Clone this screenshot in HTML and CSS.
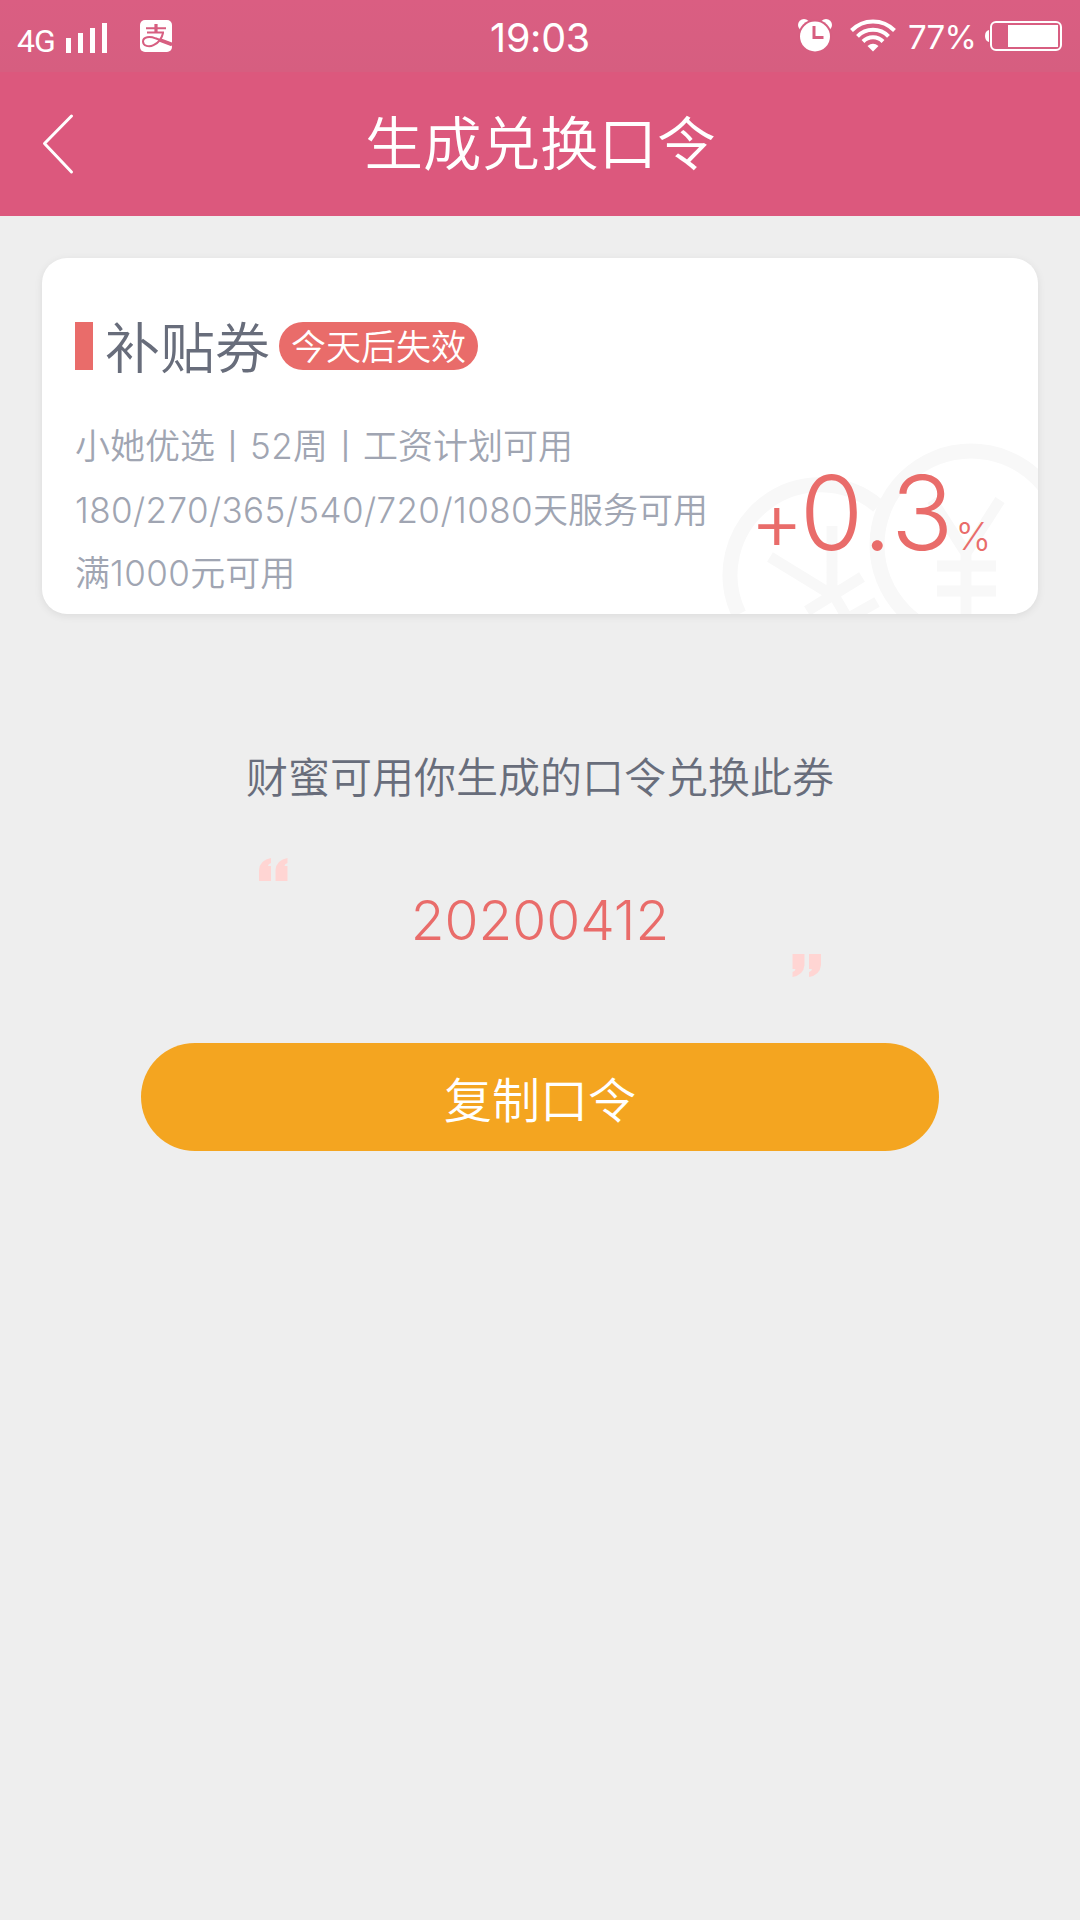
FILE: index.html
```html
<!DOCTYPE html>
<html lang="zh-CN">
<head>
  <meta charset="UTF-8">
  <meta name="viewport" content="width=device-width, initial-scale=1.0">
  <title>生成兑换口令</title>
  <link rel="stylesheet" href="styles.css">
</head>
<body>
  <div class="status-bar">
    <div class="status-left">
      <span class="network">4G</span>
      <svg class="signal" width="42" height="30" viewBox="0 0 42 30" fill="#fff">
        <rect x="0" y="15" width="5" height="15"/>
        <rect x="12" y="10" width="5" height="20"/>
        <rect x="24" y="5" width="5" height="25"/>
        <rect x="36" y="0" width="5" height="30"/>
      </svg>
      <svg class="pay-icon" width="32" height="32" viewBox="0 0 32 32">
        <rect width="32" height="32" rx="5" fill="#fff"/>
        <g fill="none" stroke="#d75e80">
          <path d="M6 8.2h20M7 12.6h17" stroke-width="2"/>
          <path d="M16 4v9" stroke-width="3.2"/>
          <path d="M23 13c-1 5-5 10-9.500 12.200C9 27.500 3 26 3 21.500c0-5 7-5.500 12.500-3.200L32 24.500" stroke-width="2"/>
          <path d="M20 20l12 4.500" stroke-width="3.600"/>
        </g>
      </svg>
    </div>
    <div class="time">19:03</div>
    <div class="status-right">
      <svg class="alarm" width="34" height="33" viewBox="0 0 34 33">
        <circle cx="6" cy="6" r="6" fill="#fff"/>
        <circle cx="28" cy="6" r="6" fill="#fff"/>
        <circle cx="17" cy="17.500" r="17" fill="#d75e80"/>
        <circle cx="17" cy="17.500" r="15" fill="#fff"/>
        <path d="M16 7v11.500h9.500" fill="none" stroke="#d75e80" stroke-width="3"/>
      </svg>
      <svg class="wifi" width="46" height="33" viewBox="0 0 46 33">
        <g fill="none" stroke="#fff" stroke-width="4">
          <path d="M1.500 11.500a30 30 0 0 1 43 0"/>
          <path d="M7.500 17.300a21.500 21.500 0 0 1 31 0"/>
          <path d="M13 22.500a14 14 0 0 1 20 0"/>
        </g>
        <path d="M17.500 27q5.500-4.500 11 0L23 32.500z" fill="#fff"/>
      </svg>
      <span class="percent">77%</span>
      <svg class="battery" width="78" height="30" viewBox="0 0 78 30">
        <path d="M4 9v12q-4-1-4-6t4-6z" fill="#fff"/>
        <rect x="6" y="1" width="70" height="28" rx="5" fill="none" stroke="#fff" stroke-width="2"/>
        <rect x="23" y="4" width="50" height="22" fill="#fff"/>
      </svg>
    </div>
  </div>

  <div class="nav-bar">
    <svg class="back" width="32" height="62" viewBox="0 0 32 62">
      <path d="M29.500 3L2.500 30.500L29.500 59" fill="none" stroke="#fff" stroke-width="3" stroke-linecap="round" stroke-linejoin="round"/>
    </svg>
    <h1>生成兑换口令</h1>
  </div>

  <div class="coupon">
    <svg class="coins" width="318" height="174" viewBox="0 0 318 174" fill="none" stroke="#f8f8f8">
      <path d="M158 66A90 90 0 0 0 19 174" stroke-width="15"/>
      <circle cx="251" cy="105" r="94" stroke-width="15"/>
      <path d="M212 60l34 53l34-53M246 109v65M217 126h59M217 151h59" stroke-width="11"/>
      <path d="M50 117l62 38V86M87 171l55-34M118 184l39-22M112 152l20 34" stroke-width="11"/>
    </svg>
    <div class="coupon-info">
      <div class="coupon-title">
        <span class="mark"></span>
        <h2>补贴券</h2>
        <span class="tag">今天后失效</span>
      </div>
      <p>小她优选丨<span>52</span>周丨工资计划可用</p>
      <p><span>180/270/365/540/720/1080</span>天服务可用</p>
      <p>满<span>1000</span>元可用</p>
    </div>
    <div class="rate">
      <span class="plus">+</span><span class="number">0.3</span><span class="unit">%</span>
    </div>
  </div>

  <p class="tip">财蜜可用你生成的口令兑换此券</p>

  <div class="code-box">
    <svg class="quote" width="29" height="23" viewBox="0 0 29 23" fill="#ffd5d3">
      <path id="mark" d="M0 23V12Q1 2 12 0V5Q9 6 9 8H12V23z"/>
      <use href="#mark" x="16.500"/>
    </svg>
    <div class="code">20200412</div>
    <svg class="quote quote-end" width="29" height="23" viewBox="0 0 29 23" fill="#ffd5d3">
      <use href="#mark"/>
      <use href="#mark" x="16.500"/>
    </svg>
  </div>

  <button class="copy" type="button">复制口令</button>
</body>
</html>
```

FILE: styles.css
```css
* {
  box-sizing: border-box;
  margin: 0;
  padding: 0;
}

body {
  min-height: 1920px;
  background-color: #eeeeee;
  font-family: Inter, "Noto Sans CJK SC", sans-serif;
  font-weight: 350;
  color: #686d7b;
}

svg {
  display: block;
  flex-shrink: 0;
}

.status-bar {
  display: grid;
  grid-template-columns: 1fr auto 1fr;
  height: 72px;
  padding: 0 17px;
  background: linear-gradient(#da5e82, #d65e80);
  color: #fff;
  font-weight: 400;
}

.status-left, .status-right {
  display: flex;
  align-items: flex-start;
}

.status-right {
  justify-content: flex-end;
}

.network {
  width: 49px;
  margin-top: 21px;
  font-family: Roboto, sans-serif;
  font-size: 32px;
  line-height: 40px;
  letter-spacing: -1px;
}

.signal {
  margin-top: 23px;
}

.pay-icon {
  margin: 20px 0 0 32px;
}

.time {
  margin-top: 14px;
  font-size: 39.500px;
  line-height: 48px;
  letter-spacing: -0.3px;
}

.alarm {
  margin: 19px 18px 0 0;
}

.wifi {
  margin: 19px 12px 0 0;
}

.percent {
  width: 77px;
  margin-top: 17px;
  font-size: 33px;
  line-height: 40px;
  letter-spacing: -0.7px;
}

.battery {
  margin-top: 21px;
}

.nav-bar {
  display: grid;
  grid-template-columns: 1fr auto 1fr;
  align-items: center;
  height: 144px;
  padding: 0 42px;
  background-color: #dc587d;
  color: #fff;
}

.nav-bar h1 {
  font-size: 58.500px;
  line-height: 80px;
  font-weight: 350;
}

.coupon {
  position: relative;
  display: flex;
  justify-content: space-between;
  width: 996px;
  height: 356px;
  margin: 42px auto 0;
  padding: 64px 47px 0 33px;
  border-radius: 25px;
  background-color: #fff;
  box-shadow: 0 2px 8px rgba(0, 0, 0, 0.08);
  overflow: hidden;
}

/* pale coins behind the rate */
.coins {
  position: absolute;
  right: 0;
  bottom: 0;
}

.coupon-info, .rate {
  position: relative;
}

.coupon-title {
  display: flex;
  align-items: center;
  height: 48px;
  margin-bottom: 45px;
}

.mark {
  width: 18px;
  height: 48px;
  margin-right: 12px;
  background-color: #e96c6a;
}

.coupon-title h2 {
  padding-top: 4px;
  font-size: 55px;
  line-height: 60px;
  font-weight: 350;
}

.tag {
  width: 199px;
  height: 48px;
  margin-left: 9px;
  border-radius: 24px;
  background-color: #e96c6a;
  color: #fff;
  font-size: 35px;
  line-height: 51px;
  text-align: center;
}

.coupon-info p {
  font-size: 35px;
  line-height: 63.500px;
  color: #a0a5b2;
  white-space: nowrap;
}

.coupon-info p span {
  letter-spacing: 0.4px;
}

.rate {
  display: flex;
  align-items: baseline;
  margin-top: 128px;
  color: #e96c6a;
  font-weight: 300;
  line-height: 126px;
}

.plus {
  margin-right: -4px;
  font-size: 82px;
}

.number {
  font-size: 103px;
  letter-spacing: 2px;
}

.unit {
  margin-bottom: 3px;
  font-size: 38px;
}

.tip {
  margin-top: 133px;
  font-size: 42px;
  line-height: 62px;
  text-align: center;
}

.code-box {
  display: flex;
  justify-content: space-between;
  width: 563px;
  height: 119px;
  margin: 49px auto 0;
}

.code {
  margin-top: 29px;
  color: #e96c6a;
  font-size: 55px;
  line-height: 66px;
}

.quote-end {
  align-self: flex-end;
  transform: rotate(180deg);
}

.copy {
  display: block;
  width: 798px;
  height: 108px;
  margin: 66px auto 0;
  border: none;
  border-radius: 54px;
  background-color: #f4a520;
  color: #fff;
  font-family: inherit;
  font-size: 48px;
  font-weight: 350;
  cursor: pointer;
}
```
